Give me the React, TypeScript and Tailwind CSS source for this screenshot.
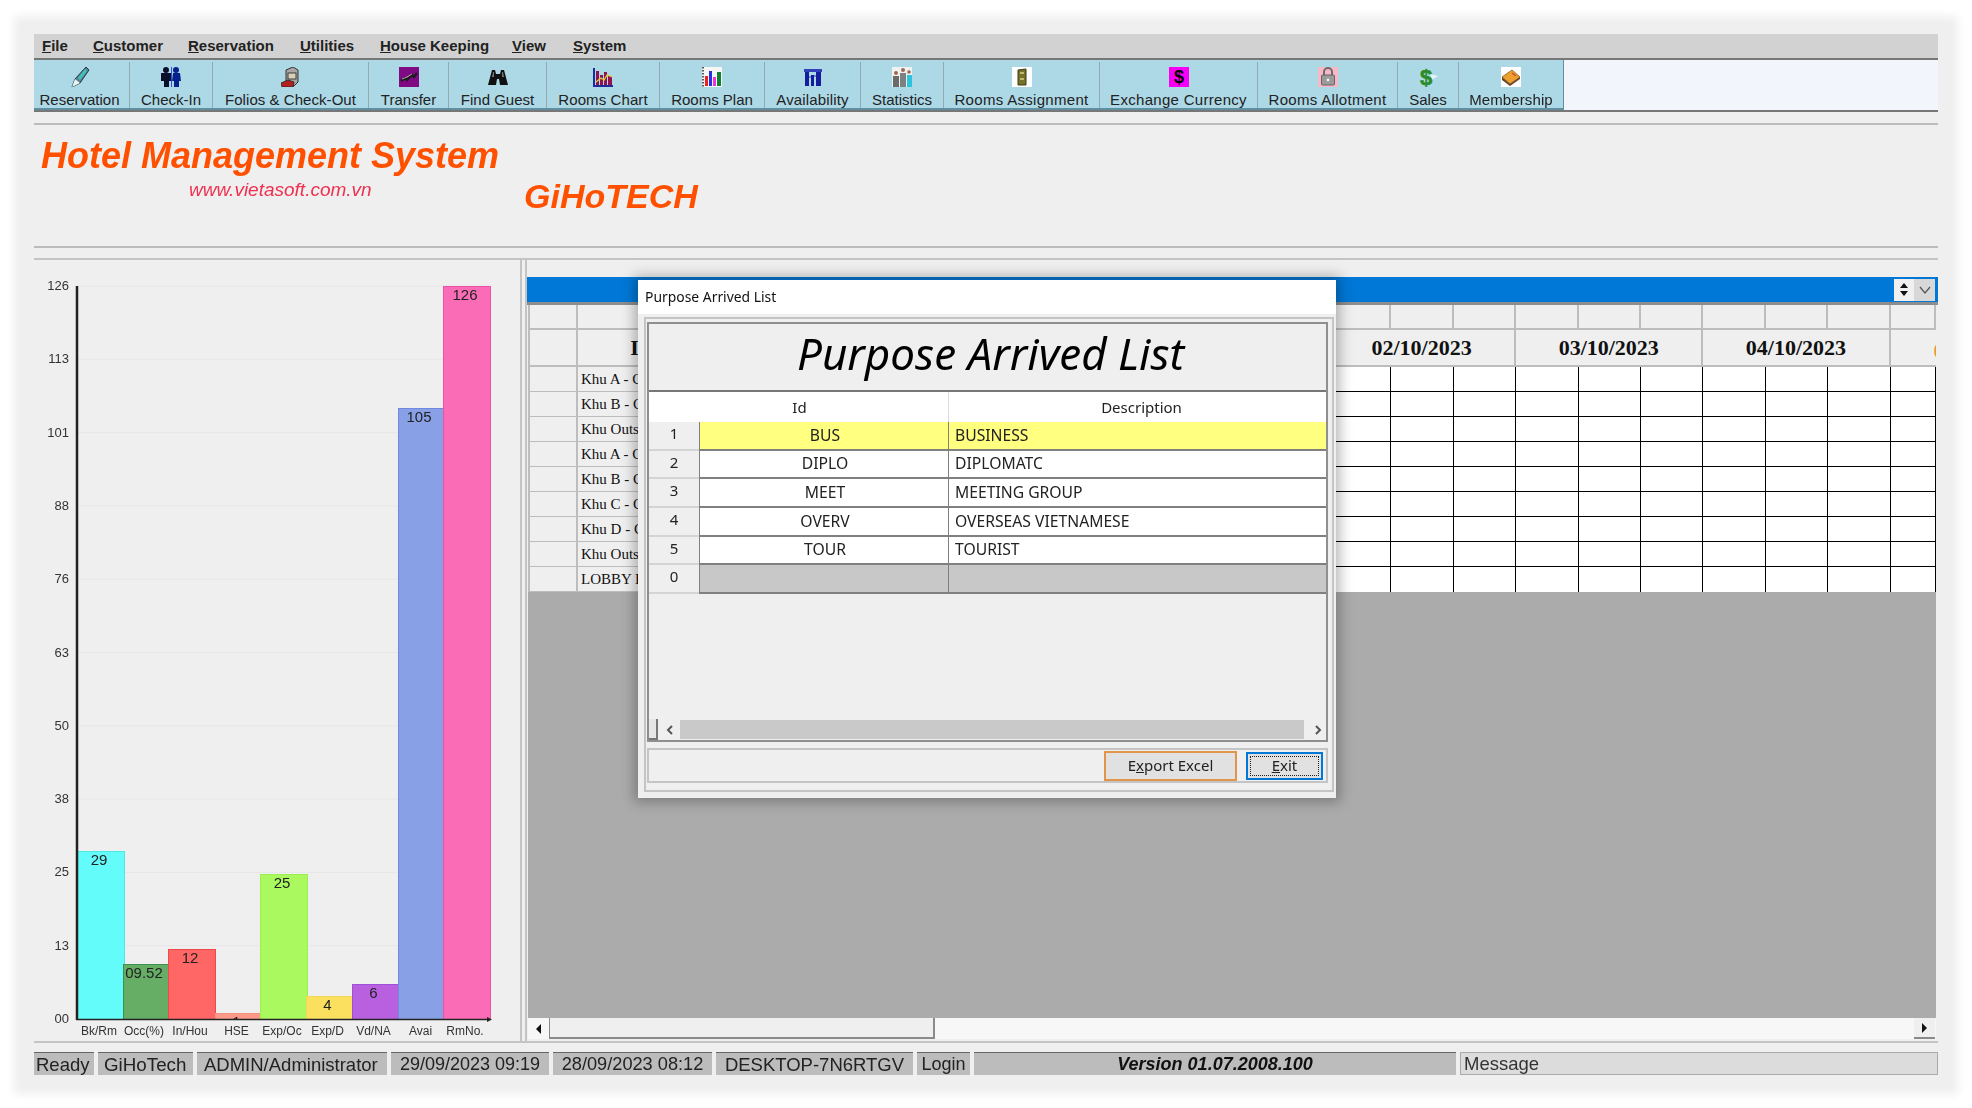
import React from 'react';

const sans = 'font-["Liberation_Sans",Arial,sans-serif]';
const ui = 'font-["Noto_Sans","Liberation_Sans",sans-serif]';
const serif = 'font-["Liberation_Serif","Times_New_Roman",serif]';

const menus = [
  { key: 'F', rest: 'ile', cls: 'ml-[8px] w-[51px]' },
  { key: 'C', rest: 'ustomer', cls: 'w-[95px]' },
  { key: 'R', rest: 'eservation', cls: 'w-[112px]' },
  { key: 'U', rest: 'tilities', cls: 'w-[80px]' },
  { key: 'H', rest: 'ouse Keeping', cls: 'w-[132px]' },
  { key: 'V', rest: 'iew', cls: 'w-[61px]' },
  { key: 'S', rest: 'ystem', cls: 'w-[70px]' },
];

const PenIcon = () => (
  <svg viewBox="0 0 20 20" className="h-5 w-5 shrink-0">
    <path d="M16 0 19 3 10 16 2 20 5 12Z" fill="#5d7f86" stroke="#1e3a44" strokeWidth="1" />
    <path d="M15 2 17 4 10 13 8 11Z" fill="#3fc3c0" />
    <path d="M5 12 2 20 10 16Z" fill="#e8f4f4" />
  </svg>
);
const PeopleIcon = () => (
  <svg viewBox="0 0 20 20" className="h-5 w-5 shrink-0">
    <g fill="#0a0f2c">
      <circle cx="5" cy="3" r="3" />
      <path d="M0 6h10v8H8v6H3v-6H0Z" />
    </g>
    <path d="M10 0h1v20h-1Z" fill="#2a50d8" />
    <g fill="#06208c">
      <circle cx="15" cy="3" r="3" />
      <path d="M12 6h7l1 8h-2v6h-5v-6h-2Z" />
    </g>
  </svg>
);
const FolioIcon = () => (
  <svg viewBox="0 0 20 20" className="h-5 w-5 shrink-0">
    <path d="M5 3 12 0 17 3V15L13 19H5Z" fill="#a9a5a5" stroke="#333" />
    <rect x="7" y="6" width="8" height="6" fill="#d8d0b8" stroke="#222" strokeWidth=".8" />
    <path d="M0 16 7 13 13 15 12 20H1Z" fill="#b3221c" stroke="#222" strokeWidth=".8" />
  </svg>
);
const TransferIcon = () => (
  <svg viewBox="0 0 20 20" className="h-5 w-5 shrink-0">
    <rect width="20" height="20" fill="#7f0a84" />
    <path d="M2 14 6 11 8 13 13 8 15 10 18 6" fill="none" stroke="#1c1c1c" strokeWidth="2.4" />
    <path d="M3 12 8 10 13 7" fill="none" stroke="#c9c9c9" strokeWidth=".8" />
  </svg>
);
const BinocularsIcon = () => (
  <svg viewBox="0 0 20 20" className="h-5 w-5 shrink-0">
    <path d="M4 3h3l1 4h4l1-4h3l4 15h-8l-1-6H9l-1 6H0Z" fill="#111" />
    <path d="M5 5h1v5H4Z M14 5h1l1 5h-2Z" fill="#777" />
  </svg>
);
const RoomsChartIcon = () => (
  <svg viewBox="0 0 20 20" className="h-5 w-5 shrink-0">
    <path d="M1 1V19H20" fill="none" stroke="#1f2a9a" strokeWidth="2" />
    <path d="M3 4h3v14H3ZM7 8h3v10H7ZM11 5h3v13h-3ZM15 9h4v9h-4Z" fill="#8e1450" />
    <path d="M3 15 8 11 11 13 14 8 19 10" fill="none" stroke="#e8c832" strokeWidth="1.3" />
  </svg>
);
const RoomsPlanIcon = () => (
  <svg viewBox="0 0 20 20" className="h-5 w-5 shrink-0">
    <rect width="20" height="20" fill="#f6f6f6" />
    <path d="M1 0V20" stroke="#222" strokeDasharray="1.5 1.5" strokeWidth="1.5" />
    <rect x="3" y="9" width="3" height="10" fill="#ee2222" />
    <rect x="7" y="4" width="3" height="15" fill="#2233dd" />
    <rect x="11" y="10" width="3" height="9" fill="#ee33dd" />
    <rect x="15" y="5" width="4" height="14" fill="#0e8030" />
  </svg>
);
const AvailabilityIcon = () => (
  <svg viewBox="0 0 20 20" className="h-5 w-5 shrink-0">
    <path d="M1 2H19V5H1Z" fill="#3040b8" />
    <path d="M2 5h4v14H2ZM8 8h3v11H8ZM13 5h5v14h-5Z" fill="#141e9c" />
    <path d="M6 10h2M11 9h2" stroke="#5e6ad0" strokeWidth="1.5" />
  </svg>
);
const StatisticsIcon = () => (
  <svg viewBox="0 0 20 20" className="h-5 w-5 shrink-0">
    <rect width="20" height="20" fill="#eef2f2" />
    <g fill="#6a6a6a">
      <circle cx="4" cy="6" r="2" fill="#a06a50" />
      <path d="M1 9h6v11H1Z" />
      <circle cx="11" cy="3" r="2" fill="#a06a50" />
      <path d="M8 6h6v14H8Z" fill="#7d8280" />
    </g>
    <circle cx="17" cy="5" r="1.8" fill="#a06a50" />
    <path d="M15 8h5v12h-5Z" fill="#2cc4d8" />
  </svg>
);
const AssignIcon = () => (
  <svg viewBox="0 0 20 20" className="h-5 w-5 shrink-0">
    <rect width="20" height="20" fill="#fff" />
    <path d="M6 3 14 2V18H6Z" fill="#77722a" stroke="#3c3a14" />
    <path d="M8 6h4M8 12h4" stroke="#d8d48a" strokeWidth="1.4" />
  </svg>
);
const ExchangeIcon = () => (
  <svg viewBox="0 0 20 20" className="h-5 w-5 shrink-0">
    <rect width="20" height="20" fill="#f800f8" />
    <text x="10" y="16" textAnchor="middle" fontSize="18" fontWeight="700" fontFamily="Liberation Sans" fill="#000">$</text>
  </svg>
);
const LockIcon = () => (
  <svg viewBox="0 0 20 20" className="h-5 w-5 shrink-0">
    <rect width="20" height="20" fill="#f8b8c6" />
    <path d="M6 9V5a4 4 0 0 1 8 0v4" fill="none" stroke="#6c6c6c" strokeWidth="2" />
    <rect x="3.5" y="8" width="13" height="10" rx="1" fill="#9a9a9a" stroke="#666" />
    <circle cx="10" cy="13" r="1.4" fill="#f2f2f2" />
  </svg>
);
const SalesIcon = () => (
  <svg viewBox="0 0 20 20" className="h-5 w-5 shrink-0">
    <path d="M12 7 20 9 14 13Z" fill="#e6f2f4" />
    <text x="8" y="17.5" textAnchor="middle" fontSize="22" fontWeight="700" fontFamily="Liberation Sans" fill="#2a8c2a" stroke="#2a8c2a" strokeWidth=".6">$</text>
  </svg>
);
const BookIcon = () => (
  <svg viewBox="0 0 20 20" className="h-5 w-5 shrink-0">
    <rect width="20" height="20" fill="#fff" />
    <path d="M1 10 11 3 19 10 9 17Z" fill="#eba030" stroke="#8a5a20" strokeWidth=".8" />
    <path d="M1 10V13L9 19 19 12V10L9 17Z" fill="#6e4426" />
    <path d="M11 6 15 9" stroke="#d84a20" strokeWidth="1.5" />
  </svg>
);

const tools = [
  { label: 'Reservation', cls: 'w-[96px] pr-[4px]', text: '', icon: <PenIcon /> },
  { label: 'Check-In', cls: 'w-[83px]', text: '', icon: <PeopleIcon /> },
  { label: 'Folios & Check-Out', cls: 'w-[156px]', text: 'tracking-[0.05px]', icon: <FolioIcon /> },
  { label: 'Transfer', cls: 'w-[80px]', text: '', icon: <TransferIcon /> },
  { label: 'Find Guest', cls: 'w-[98px]', text: '', icon: <BinocularsIcon /> },
  { label: 'Rooms Chart', cls: 'w-[113px]', text: 'tracking-[0.1px]', icon: <RoomsChartIcon /> },
  { label: 'Rooms Plan', cls: 'w-[105px]', text: '', icon: <RoomsPlanIcon /> },
  { label: 'Availability', cls: 'w-[96px]', text: 'tracking-[0.15px]', icon: <AvailabilityIcon /> },
  { label: 'Statistics', cls: 'w-[83px]', text: '', icon: <StatisticsIcon /> },
  { label: 'Rooms Assignment', cls: 'w-[156px]', text: 'tracking-[0.3px]', icon: <AssignIcon /> },
  { label: 'Exchange Currency', cls: 'w-[158px]', text: 'tracking-[0.3px]', icon: <ExchangeIcon /> },
  { label: 'Rooms Allotment', cls: 'w-[140px]', text: 'tracking-[0.3px]', icon: <LockIcon /> },
  { label: 'Sales', cls: 'w-[61px]', text: '', icon: <SalesIcon /> },
  { label: 'Membership', cls: 'w-[104px]', text: 'tracking-[0.1px]', icon: <BookIcon /> },
];

const bars = [
  { name: 'Bk/Rm', x: 77, w: 47, top: 851, fill: '#64fcfa', stroke: '#4ce8e6', text: '29' },
  { name: 'Occ(%)', x: 123, w: 45, top: 964, fill: '#66ad66', stroke: '#3f8f4f', text: '09.52' },
  { name: 'In/Hou', x: 168, w: 47, top: 949, fill: '#ff6666', stroke: '#f04848', text: '12' },
  { name: 'HSE', x: 215, w: 46, top: 1013, fill: '#fc9a8a', stroke: '#f88e7e', text: '1' },
  { name: 'Exp/Oc', x: 260, w: 47, top: 874, fill: '#aaf95f', stroke: '#9cef50', text: '25' },
  { name: 'Exp/D', x: 306, w: 46, top: 996, fill: '#fbe060', stroke: '#f4d850', text: '4' },
  { name: 'Vd/NA', x: 352, w: 46, top: 984, fill: '#b860e0', stroke: '#a050d8', text: '6' },
  { name: 'Avai', x: 398, w: 45, top: 408, fill: '#88a0e6', stroke: '#7088e0', text: '105' },
  { name: 'RmNo.', x: 443, w: 47, top: 286, fill: '#fb6cb6', stroke: '#f050a8', text: '126' },
];
const ticks = ['126', '113', '101', '88', '76', '63', '50', '38', '25', '13', '00'];

const roomNames = ['Khu A - Ch', 'Khu B - Ch', 'Khu Outside', 'Khu A - Ch', 'Khu B - Ch', 'Khu C - Ch', 'Khu D - Ch', 'Khu Outside', 'LOBBY B'];
const dayCols = [0, 1, 2, 3, 4, 5, 6, 7, 8, 9];
const gridCols = 'grid grid-cols-[50px_751px_repeat(9,62.4px)_1fr]';

const purposes = [
  { no: '1', id: 'BUS', desc: 'BUSINESS', cls: 'bg-[#ffff80]' },
  { no: '2', id: 'DIPLO', desc: 'DIPLOMATC', cls: 'bg-white' },
  { no: '3', id: 'MEET', desc: 'MEETING GROUP', cls: 'bg-white' },
  { no: '4', id: 'OVERV', desc: 'OVERSEAS VIETNAMESE', cls: 'bg-white' },
  { no: '5', id: 'TOUR', desc: 'TOURIST', cls: 'bg-white' },
  { no: '0', id: '', desc: '', cls: 'bg-[#c8c8c8]' },
];

const statusCells = [
  { text: 'Ready', cls: 'w-[60px] pl-[2px]' },
  { text: 'GiHoTech', cls: 'w-[95px] pl-[6px] text-[18.8px]' },
  { text: 'ADMIN/Administrator', cls: 'w-[190px] pl-[7px]' },
  { text: '29/09/2023 09:19', cls: 'w-[158px] justify-center text-[18px]' },
  { text: '28/09/2023 08:12', cls: 'w-[159px] justify-center text-[18.2px]' },
  { text: 'DESKTOP-7N6RTGV', cls: 'w-[197px] justify-center' },
  { text: 'Login', cls: 'w-[53px] justify-center text-[18px]' },
];

function Chart() {
  return (
    <svg viewBox="34 260 486 781" className="h-[781px] w-[486px]" fontFamily="Liberation Sans">
      <clipPath id="plot"><rect x="77" y="280" width="420" height="739" /></clipPath>
      {ticks.map((t, i) => {
        const y = 286 + i * 73.3;
        return (
          <g key={t}>
            {i < 10 && <line x1="78" x2="490" y1={y} y2={y} stroke="#e6e6e6" />}
            <text x="69" y={y + 4} textAnchor="end" fontSize="13" fill="#333">{t}</text>
          </g>
        );
      })}
      {bars.map(b => (
        <g key={b.name}>
          <rect x={b.x + 0.5} y={b.top + 0.5} width={b.w} height={1019 - b.top} fill={b.fill} stroke={b.stroke} />
          <text
            x={b.x + b.w / 2 - 1.5}
            y={b.top + 14}
            textAnchor="middle"
            fontSize="15"
            fill="#222"
            clipPath="url(#plot)"
          >
            {b.text}
          </text>
          <text x={b.x + b.w / 2 - (b.name === 'Avai' ? 0 : 1.5)} y="1035" textAnchor="middle" fontSize="12" fill="#333">{b.name}</text>
        </g>
      ))}
      <line x1="77" x2="77" y1="286" y2="1020" stroke="#222" strokeWidth="2.5" />
      <line x1="76" x2="488" y1="1019.5" y2="1019.5" stroke="#222" strokeWidth="1.5" />
      <path d="M487 1017 492 1019.5 487 1022Z" fill="#222" />
    </svg>
  );
}

function BookingGrid() {
  return (
    <div className={`${serif} ml-[1px] h-[713px] w-[1408px] overflow-hidden bg-[#ababab] text-[#111]`}>
      <div className={`${gridCols} h-[25px] bg-[#efefef]`}>
        <div className="border-r-2 border-b-2 border-l-2 border-[#bdbdbd]" />
        <div className="border-r-2 border-b-2 border-[#bdbdbd]" />
        {dayCols.map(c => <div key={c} className="border-r-2 border-b-2 border-[#bdbdbd]" />)}
      </div>
      <div className={`${gridCols} h-[37px] bg-[#efefef]`}>
        <div className="border-r-2 border-b-2 border-l-2 border-[#bdbdbd]" />
        <div className="flex items-center justify-center border-r-2 border-b-2 border-[#bdbdbd] text-[22px] font-bold"><span className="ml-[-636px]">I</span></div>
        <div className="col-span-3 flex items-center justify-center border-r-2 border-b-2 border-[#bdbdbd] text-[22px] font-bold">02/10/2023</div>
        <div className="col-span-3 flex items-center justify-center border-r-2 border-b-2 border-[#bdbdbd] text-[22px] font-bold">03/10/2023</div>
        <div className="col-span-3 flex items-center justify-center border-r-2 border-b-2 border-[#bdbdbd] text-[22px] font-bold">04/10/2023</div>
        <div className="overflow-hidden whitespace-nowrap border-b-2 border-[#bdbdbd] pl-[43px] pt-[4px] text-[22px] font-bold text-[#e8963c]">05/10/2023</div>
      </div>
      {roomNames.map((name, i) => (
        <div key={i} className={`${gridCols} h-[25px] bg-white`}>
          <div className="border-r-2 border-b border-l-2 border-[#bdbdbd] bg-[#efefef]" />
          <div className="flex items-center overflow-hidden whitespace-nowrap border-r border-b border-[#bdbdbd] bg-[#efefef] pl-[3px] text-[15px]">{name}</div>
          {dayCols.map(c => (
            <div key={c} className={i === roomNames.length - 1 ? 'border-r border-black' : 'border-r border-b border-black'} />
          ))}
        </div>
      ))}
    </div>
  );
}

function PurposeDialog() {
  return (
    <div className={`${ui} absolute left-[604px] top-[246px] flex h-[518px] w-[698px] flex-col bg-[#efefef] text-[#222] shadow-[0_0_12px_4px_rgba(0,0,0,0.28)]`}>
      <div className="flex h-[34px] items-center bg-white pl-[7px] text-[13.9px] text-[#111]">Purpose Arrived List</div>
      <div className="ml-[6px] mr-[2px] mt-[3px] flex h-[475px] flex-col border-2 border-[#c4c4c4] pl-[1px] pr-[4px] pt-[3px]">
        <div className="flex h-[420px] flex-col border-2 border-[#8f8f8f]">
          <div className="flex h-[68px] shrink-0 items-center justify-center border-b-2 border-[#777] pb-[8px] pl-[6px] text-[44px] italic text-black">Purpose Arrived List</div>
          <div className="flex h-[30px] shrink-0 bg-white text-[15px]">
            <div className="w-[50px]" />
            <div className="flex w-[250px] items-center justify-center border-r border-[#ddd] pr-[48px]">Id</div>
            <div className="flex flex-1 items-center justify-center pl-[8px]">Description</div>
          </div>
          {purposes.map(p => (
            <div key={p.no} className="flex h-[28.7px] shrink-0 text-[15.7px]">
              <div className="w-[50px] border-b-2 border-[#d4d4d4] text-center text-[15px]">{p.no}</div>
              <div className={`${p.cls} flex w-[250px] items-center justify-center border-r border-b-2 border-l border-[#808080] pl-[2px]`}>{p.id}</div>
              <div className={`${p.cls} flex flex-1 items-center border-b-2 border-[#808080] pl-[6px]`}>{p.desc}</div>
            </div>
          ))}
          <div className="flex-1" />
          <div className="flex h-[21px] shrink-0 items-center">
            <div className="h-full w-[9px] border-r-2 border-b-2 border-[#777] bg-[#e6e6e6]" />
            <svg viewBox="0 0 10 10" className="ml-[7px] h-[10px] w-[10px]"><path d="M7 1 3 5 7 9" fill="none" stroke="#555" strokeWidth="2" /></svg>
            <div className="ml-[5px] h-[19px] w-[624px] bg-[#c9c9c9]" />
            <svg viewBox="0 0 10 10" className="ml-[9px] h-[10px] w-[10px]"><path d="M3 1 7 5 3 9" fill="none" stroke="#555" strokeWidth="2" /></svg>
          </div>
        </div>
        <div className="mt-[6px] flex h-[35px] items-center justify-end gap-[9px] border-2 border-[#c4c4c4] pr-[3px] text-[15px]">
          <button className="h-[30px] w-[133px] border-2 border-[#e0954a] bg-[#e1e1e1] text-[#222]">
            E<span className="underline">x</span>port Excel
          </button>
          <button className="flex h-[28px] w-[77px] items-center justify-center border-2 border-[#0078d7] bg-[#e1e1e1] p-[2px]">
            <span className="flex h-full w-full items-center justify-center border border-dotted border-[#222]">
              <span><span className="underline">E</span>xit</span>
            </span>
          </button>
        </div>
      </div>
    </div>
  );
}

export default function App() {
  return (
    <div className="h-[1108px] w-[1972px] overflow-hidden bg-white pl-[20px] pt-[22px]">
      <div className="h-[1066px] w-[1932px] bg-[#efefef] px-[14px] pt-[12px] shadow-[0_0_9px_6px_#efefef] blur-[0.4px]">
        <div className={`${sans} relative flex h-[1041px] w-[1904px] flex-col text-[#222]`}>
          {/* Menu */}
          <div className="flex h-[26px] shrink-0 items-center border-b-2 border-[#777] bg-[#d2d2d2] pt-[1px] text-[15px] font-bold text-[#222]">
            {menus.map(m => (
              <div key={m.key} className={m.cls}><span className="underline">{m.key}</span>{m.rest}</div>
            ))}
          </div>

          {/* Toolbar */}
          <div className="flex h-[52px] shrink-0 border-b-2 border-[#777] bg-[#f2f6fc]">
            <div className="flex h-[50px] border-r border-b-2 border-[#5f8fa0] bg-[#add8e6] pt-[2px]">
              {tools.map(t => (
                <div key={t.label} className={`${t.cls} flex flex-col items-center border-r border-[#93aab2] pt-[5px] last:border-r-0`}>
                  {t.icon}
                  <span className={`${t.text} mt-[5px] whitespace-nowrap text-[15px] leading-[16px] text-[#222]`}>{t.label}</span>
                </div>
              ))}
            </div>
          </div>

          {/* Header */}
          <div className="mt-[11px] flex h-[125px] shrink-0 items-start border-t-2 border-b-2 border-[#bcbcbc] bg-[#efefef]">
            <div className="ml-[7px] w-[483px]">
              <div className="mt-[9px] text-[36px] font-bold italic leading-[44px] text-[#ff5000]">Hotel Management System</div>
              <div className="ml-[148px] mt-[1px] text-[19px] italic leading-[22px] text-[#f03050]">www.vietasoft.com.vn</div>
            </div>
            <div className="mt-[51px] text-[34px] font-bold italic leading-[40px] text-[#ff5000]">GiHoTECH</div>
          </div>

          {/* Chart and booking panels */}
          <div className="mt-[10px] flex h-[785px] shrink-0 border-t-2 border-b-2 border-[#c4c4c4]">
            <div className="w-[486px]"><Chart /></div>
            <div className="w-[7px] border-r-2 border-l-2 border-[#c4c4c4]" />
            <div className="flex flex-1 flex-col pt-[17px]">
              <div className="flex h-[28px] shrink-0 items-center justify-end border-b-[3px] border-[#8d8d8d] bg-[#0078d7] pr-[3px]">
                <div className="flex h-[22px] w-[20px] flex-col items-center justify-center gap-[3px] bg-[#f0f0f0]">
                  <svg viewBox="0 0 8 5" className="h-[5px] w-[8px]"><path d="M4 0 8 5H0Z" fill="#111" /></svg>
                  <svg viewBox="0 0 8 5" className="h-[5px] w-[8px]"><path d="M4 5 8 0H0Z" fill="#111" /></svg>
                </div>
                <div className="flex h-[22px] w-[21px] items-center justify-center bg-[#d8d8d8]">
                  <svg viewBox="0 0 12 8" className="h-[8px] w-[12px]"><path d="M1 1 6 7 11 1" fill="none" stroke="#555" strokeWidth="1.2" /></svg>
                </div>
              </div>
              <BookingGrid />
              <div className="ml-[1px] flex h-[21px] w-[1408px] shrink-0 bg-[#f7f7f7]">
                <div className="flex w-[21px] items-center justify-center">
                  <svg viewBox="0 0 5 10" className="h-[10px] w-[5px]"><path d="M5 0V10L0 5Z" fill="#111" /></svg>
                </div>
                <div className="w-[386px] border-r-2 border-b-2 border-l border-[#8a8a8a] bg-[#efefef]" />
                <div className="flex-1" />
                <div className="mr-[1px] flex w-[21px] items-center justify-center border-b-2 border-[#8a8a8a] bg-[#efefef]">
                  <svg viewBox="0 0 5 10" className="h-[10px] w-[5px]"><path d="M0 0V10L5 5Z" fill="#111" /></svg>
                </div>
              </div>
            </div>
          </div>

          {/* Status bar */}
          <div className="mt-[9px] flex h-[23px] shrink-0 gap-[4px] text-[18.5px] leading-[23px] text-[#222]">
            {statusCells.map(s => (
              <div key={s.text} className={`${s.cls} flex items-center whitespace-nowrap border-t border-[#666] bg-[#bcbcbc]`}>{s.text}</div>
            ))}
            <div className="flex w-[482px] items-center justify-center border-t border-[#666] bg-[#bcbcbc] text-[18px] font-bold italic text-[#111]">Version 01.07.2008.100</div>
            <div className="flex flex-1 items-center border border-[#aaa] bg-[#dcdcdc] pl-[3px] text-[#333]">Message</div>
          </div>

          <PurposeDialog />
        </div>
      </div>
    </div>
  );
}
